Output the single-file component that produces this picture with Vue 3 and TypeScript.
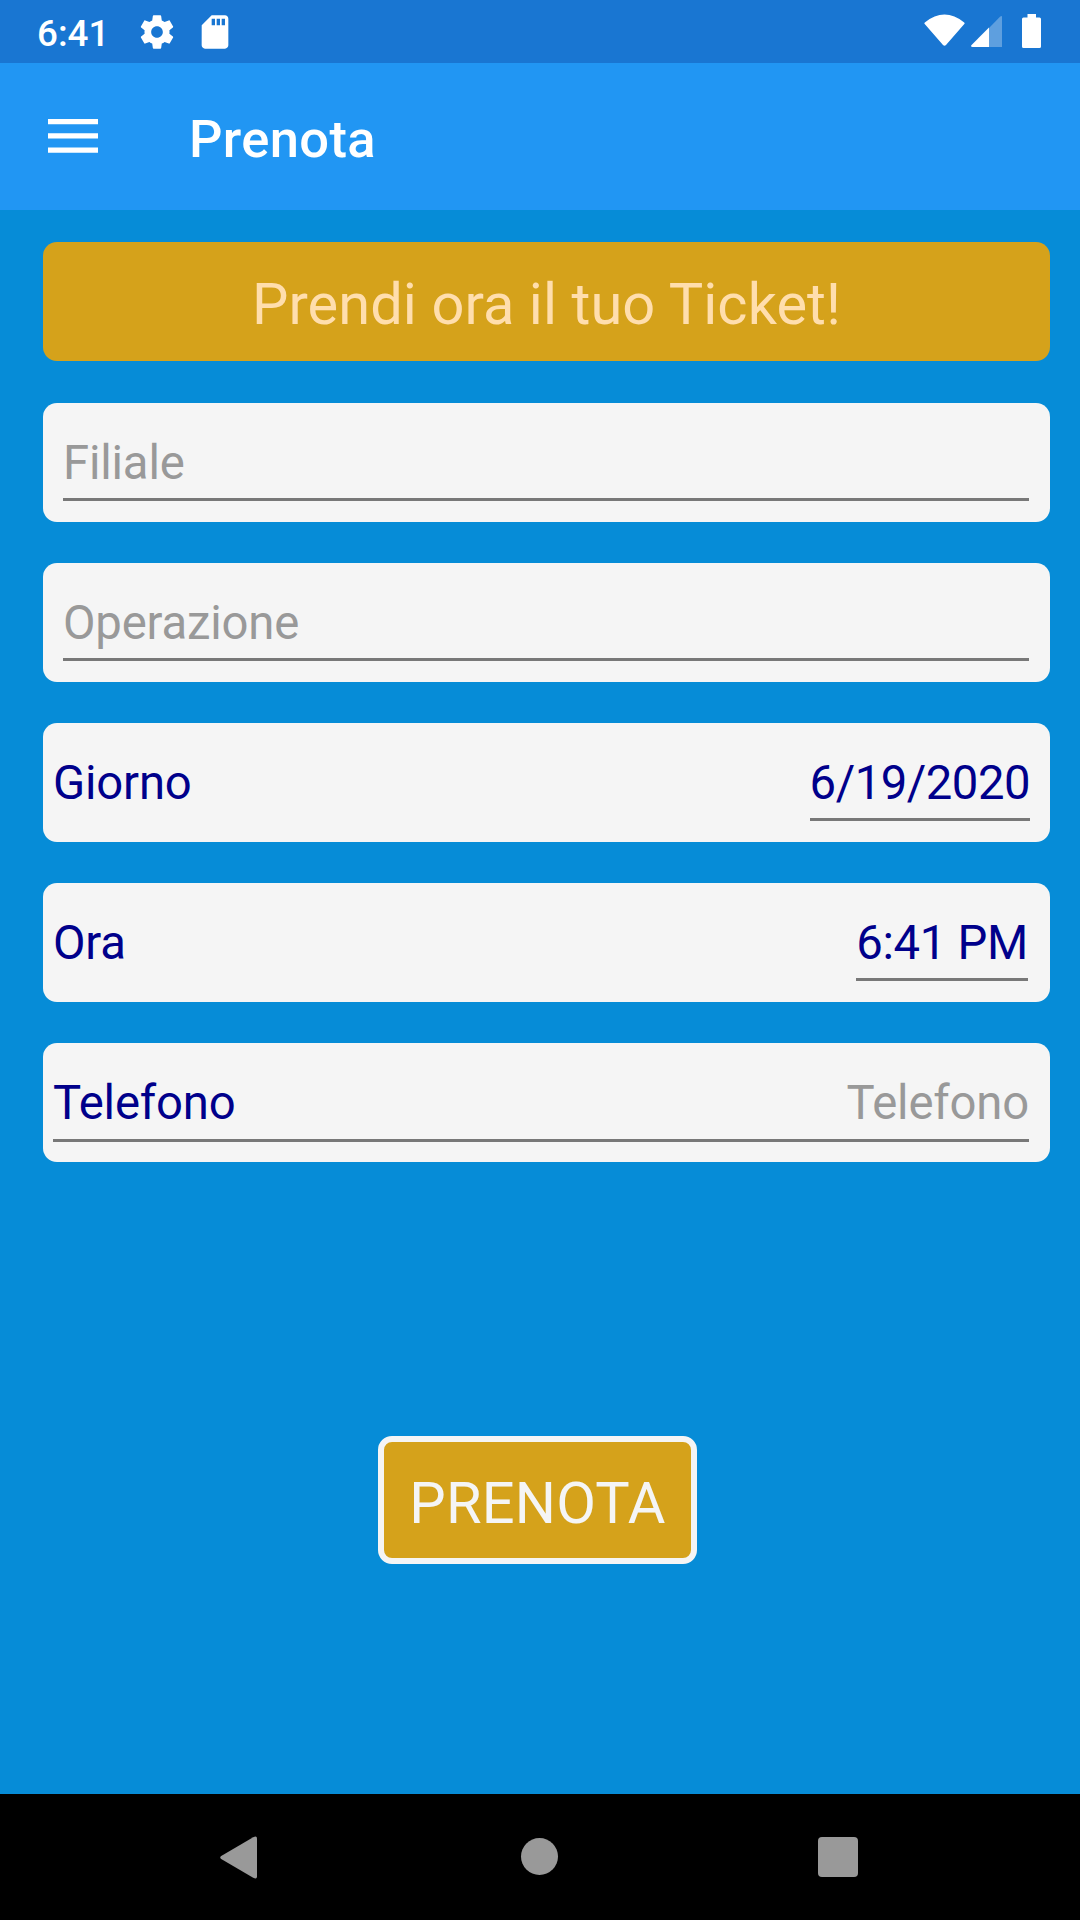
<script setup lang="ts">
interface Field {
  label?: string
  value: string
  kind: 'date' | 'entry' | 'phone' | 'time'
  muted: boolean
}

const fields: Field[] = [
  { value: 'Filiale', kind: 'entry', muted: true },
  { value: 'Operazione', kind: 'entry', muted: true },
  { label: 'Giorno', value: '6/19/2020', kind: 'date', muted: false },
  { label: 'Ora', value: '6:41 PM', kind: 'time', muted: false },
  { label: 'Telefono', value: 'Telefono', kind: 'phone', muted: true },
]
</script>

<template>
  <div class="screen">
    <header class="status">
      <span class="clock">6:41</span>
      <svg class="gear" viewBox="0 0 24 24">
        <path d="M19.43 12.98c.04-.32.07-.64.07-.98s-.03-.66-.07-.98l2.11-1.65c.19-.15.24-.42.12-.64l-2-3.46c-.12-.22-.39-.3-.61-.22l-2.49 1c-.52-.4-1.08-.73-1.69-.98l-.38-2.65C14.46 2.18 14.25 2 14 2h-4c-.25 0-.46.18-.49.42l-.38 2.65c-.61.25-1.17.59-1.69.98l-2.49-1c-.23-.09-.49 0-.61.22l-2 3.46c-.13.22-.07.49.12.64l2.11 1.65c-.04.32-.07.65-.07.98s.03.66.07.98l-2.11 1.65c-.19.15-.24.42-.12.64l2 3.46c.12.22.39.3.61.22l2.49-1c.52.4 1.08.73 1.69.98l.38 2.65c.03.24.24.42.49.42h4c.25 0 .46-.18.49-.42l.38-2.65c.61-.25 1.17-.59 1.69-.98l2.49 1c.23.09.49 0 .61-.22l2-3.46c.12-.22.07-.49-.12-.64l-2.11-1.65zM12 15.5c-1.93 0-3.5-1.57-3.5-3.5s1.57-3.5 3.5-3.5 3.5 1.57 3.5 3.5-1.57 3.5-3.5 3.5z" />
      </svg>
      <svg class="sd" viewBox="0 0 24 24">
        <path d="M18 2h-8L4.02 8 4 20c0 1.1.9 2 2 2h12c1.1 0 2-.9 2-2V4c0-1.1-.9-2-2-2zm-6 6h-2V4h2v4zm3 0h-2V4h2v4zm3 0h-2V4h2v4z" />
      </svg>
      <svg class="signals" viewBox="0 0 120 36">
        <path d="M.8 8.4Q20.500-7.400 40.200 8.400Q41 9.200 40.300 10L22 31Q20.500 32.600 19 31L.7 10Q0 9.200 .8 8.400Z" />
        <path class="dim" d="M65 14L76 2.700Q78 1 78 3V33H65Z" />
        <path d="M65 13.500V33H48.500Q46 32.600 47.800 30.700Z" />
        <path d="M103.500 0H112V3.500H115.500Q117 3.500 117 5V32.500Q117 34 115.500 34H99.500Q98 34 98 32.500V5Q98 3.500 99.500 3.500H103.500Z" />
      </svg>
    </header>

    <nav class="appbar">
      <svg class="menu" viewBox="0 0 50 34">
        <path d="M0 0H50V5.250H0ZM0 14.200H50V19.450H0ZM0 28.400H50V33.650H0Z" />
      </svg>
      <h1 class="title">Prenota</h1>
    </nav>

    <main class="content">
      <div class="banner">Prendi ora il tuo Ticket!</div>
      <section class="form">
        <div v-for="(field, i) in fields" :key="i" class="card" :class="field.kind">
          <span v-if="field.label" class="label">{{ field.label }}</span>
          <span class="value" :class="{ muted: field.muted }">{{ field.value }}</span>
        </div>
      </section>
      <button class="submit" type="button">PRENOTA</button>
    </main>

    <footer class="navbar">
      <svg class="back" viewBox="0 0 37 43">
        <path d="M33.200 1.200Q37-.8 37 2.500V40.500Q37 43.800 33.200 41.800L1.200 23Q-.8 21.500 1.200 20Z" />
      </svg>
      <span class="home"></span>
      <span class="recents"></span>
    </footer>
  </div>
</template>

<style>
body {
  margin: 0;
}
</style>

<style scoped>
.screen {
  display: flex;
  flex-direction: column;
  width: 1080px;
  height: 1920px;
  background: #068cd7;
  font-family: Roboto, "Noto Sans", sans-serif;
  overflow: hidden;
}
.screen svg {
  display: block;
  flex: none;
  fill: #fff;
}
.status {
  box-sizing: border-box;
  display: flex;
  align-items: center;
  height: 63px;
  flex: none;
  padding: 0 36px 0 37px;
  background: #1976d2;
  color: #fff;
}
.clock {
  width: 100px;
  padding-top: 4px;
  font-size: 36.75px;
  line-height: 44px;
  font-weight: 500;
}
.gear {
  width: 40px;
  height: 40px;
}
.sd {
  width: 40px;
  height: 40px;
  margin-left: 18px;
}
.signals {
  width: 120px;
  height: 36px;
  margin: 1px 0 0 auto;
}
.signals .dim {
  fill-opacity: 0.3;
}
.appbar {
  box-sizing: border-box;
  display: flex;
  align-items: center;
  height: 147px;
  flex: none;
  padding-left: 48px;
  background: #2196f3;
  color: #fff;
}
.menu {
  width: 50px;
  height: 34px;
  margin-bottom: 1px;
}
.title {
  margin: 0;
  padding: 4px 0 0 91px;
  font-size: 52.5px;
  line-height: 62px;
  font-weight: 500;
  letter-spacing: 0.35px;
}
.content {
  box-sizing: border-box;
  flex: 1;
  display: flex;
  flex-direction: column;
  padding: 32px 30px 0 43px;
}
.banner {
  box-sizing: border-box;
  height: 119px;
  padding-top: 5px;
  border-radius: 14px;
  background: #d5a21b;
  color: #ffdead;
  font-size: 57.75px;
  line-height: 114px;
  letter-spacing: 0.08px;
  text-align: center;
}
.form {
  display: flex;
  flex-direction: column;
  gap: 41px;
  margin-top: 42px;
}
.card {
  box-sizing: border-box;
  display: flex;
  justify-content: space-between;
  height: 119px;
  padding: 0 20px 21px 10px;
  border-radius: 14px;
  background: #f5f5f5;
  color: #00008b;
  font-size: 47.25px;
  line-height: 120px;
  letter-spacing: -0.18px;
  white-space: nowrap;
}
.value {
  box-sizing: border-box;
  height: 98px;
  border-bottom: 3px solid #787878;
}
.muted {
  color: #999;
}
.entry {
  padding-left: 20px;
  padding-right: 21px;
}
.entry .value {
  flex: 1;
}
.date .value {
  letter-spacing: -0.5px;
}
.time {
  padding-right: 22px;
}
.time .value {
  letter-spacing: -0.3px;
}
.phone {
  padding-right: 21px;
  padding-bottom: 20px;
}
.phone .label {
  box-sizing: border-box;
  flex: 1;
  height: 99px;
  border-bottom: 3px solid #787878;
}
.phone .value {
  height: 99px;
}
.submit {
  box-sizing: border-box;
  width: 319px;
  height: 128px;
  margin: 274px 0 0 335px;
  padding: 6px 0 0;
  border: 6px solid #f5f5f5;
  border-radius: 14px;
  background: #d5a21b;
  color: #f5f5f5;
  font-family: inherit;
  font-size: 57.75px;
  line-height: 110px;
  letter-spacing: 0.2px;
  text-align: center;
}
.navbar {
  box-sizing: border-box;
  display: flex;
  align-items: center;
  justify-content: space-between;
  height: 126px;
  flex: none;
  padding: 0 222px 1px 220px;
  background: #000;
}
.navbar .back {
  width: 37px;
  height: 43px;
  margin-top: 1px;
  fill: #999;
}
.home {
  width: 37px;
  height: 37px;
  margin-left: 4px;
  border-radius: 50%;
  background: #999;
}
.recents {
  width: 40px;
  height: 40px;
  margin-top: 1px;
  border-radius: 4px;
  background: #999;
}
</style>
